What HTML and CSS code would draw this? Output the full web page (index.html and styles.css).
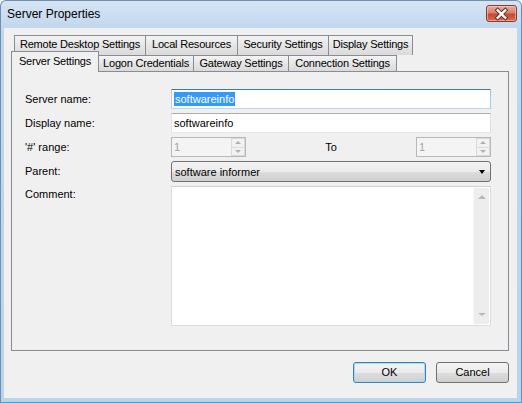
FILE: index.html
```html
<!DOCTYPE html>
<html lang="en">

<head>
    <meta charset="UTF-8">
    <title>Server Properties</title>
    <link rel="stylesheet" href="styles.css">
</head>

<body>
    <div class="window">

        <div class="titlebar">
            <span class="title">Server Properties</span>
            <div class="close_btn">
                <svg width="30" height="16" viewBox="0 0 30 16">
                    <path d="M11 4 L19 12 M19 4 L11 12" stroke="#5e2118" stroke-width="4.2" stroke-linecap="square" fill="none" />
                    <path d="M11 4 L19 12 M19 4 L11 12" stroke="#fff" stroke-width="2.4" stroke-linecap="square" fill="none" />
                </svg>
            </div>
        </div>

        <div class="client">

            <!-- two rows of tabs, the front row sits on the panel -->
            <div class="tab_row back">
                <div class="tab" style="width:132px">Remote Desktop Settings</div>
                <div class="tab" style="width:93px">Local Resources</div>
                <div class="tab" style="width:92px">Security Settings</div>
                <div class="tab" style="width:85px">Display Settings</div>
            </div>
            <div class="tab_row front">
                <div class="tab active" style="width:88px">Server Settings</div>
                <div class="tab" style="width:96px">Logon Credentials</div>
                <div class="tab" style="width:96px">Gateway Settings</div>
                <div class="tab" style="width:109px">Connection Settings</div>
            </div>

            <div class="panel">
                <div class="form">
                    <span class="label">Server name:</span>
                    <div class="textbox focused"><span class="selected">softwareinfo</span></div>

                    <span class="label">Display name:</span>
                    <div class="textbox">softwareinfo</div>

                    <span class="label">'#' range:</span>
                    <div class="range">
                        <div class="spin">
                            <span class="spin_value">1</span>
                            <div class="spin_btns">
                                <div class="spin_btn"><i class="arrow_up"></i></div>
                                <div class="spin_btn"><i class="arrow_down"></i></div>
                            </div>
                        </div>
                        <span class="to">To</span>
                        <div class="spin">
                            <span class="spin_value">1</span>
                            <div class="spin_btns">
                                <div class="spin_btn"><i class="arrow_up"></i></div>
                                <div class="spin_btn"><i class="arrow_down"></i></div>
                            </div>
                        </div>
                    </div>

                    <span class="label">Parent:</span>
                    <div class="combo">
                        <span>software informer</span>
                        <i class="combo_arrow"></i>
                    </div>

                    <span class="label comment_label">Comment:</span>
                    <div class="memo">
                        <div class="memo_text"></div>
                        <div class="scrollbar">
                            <i class="arrow_up light"></i>
                            <i class="arrow_down light"></i>
                        </div>
                    </div>
                </div>
            </div>

            <div class="buttons">
                <div class="btn default">OK</div>
                <div class="btn">Cancel</div>
            </div>
        </div>
    </div>
</body>

</html>
```

FILE: styles.css
```css
* {
    box-sizing: border-box;
}

body {
    margin: 0;
    font-family: "Liberation Sans", Arial, sans-serif;
    font-size: 11px;
    color: #000;
    background: #fff;
}

/* ==== window frame ==== */

.window {
    width: 522px;
    height: 403px;
    display: flex;
    flex-direction: column;
    padding: 0 4px 4px 3px;
    border: 1px solid;
    border-color: #6f8fb0 #3aa0d8 #3aa0d8 #6f8fb0;
    border-radius: 6px 6px 0 0;
    background: linear-gradient(#d6e4f4, #c1d6ec 28px, #bcd3ea);
}

.titlebar {
    height: 27px;
    display: flex;
    justify-content: space-between;
    align-items: flex-start;
    padding-left: 3px;
}

.title {
    font-size: 12px;
    line-height: 27px;
}

.close_btn {
    width: 31px;
    height: 17px;
    margin-top: 4px;
    border: 1px solid #8a3a2e;
    border-radius: 3px;
    background: linear-gradient(#e9ab9d, #d8806f 45%, #c54a37 55%, #d86a52);
    box-shadow: inset 0 0 0 1px rgba(255, 220, 210, 0.5);
    display: flex;
    align-items: center;
    justify-content: center;
}

.close_btn svg {
    display: block;
}

.client {
    flex: 1;
    background: #f0f0f0;
    padding: 7px 8px 0 7px;
    display: flex;
    flex-direction: column;
}

/* ==== tabs ==== */

.tab_row {
    display: flex;
}

.tab_row.back {
    height: 20px;
    margin-left: 3px;
}

.tab_row.front {
    height: 20px;
    margin-top: -4px;
    align-items: flex-end;
    position: relative;
    z-index: 1;
}

.tab {
    border: 1px solid #898c95;
    border-bottom: none;
    margin-left: -1px;
    text-align: center;
    white-space: nowrap;
    letter-spacing: -0.2px;
    background: linear-gradient(#f4f4f4, #e6e6e6 50%, #dadada);
}

.tab:first-child {
    margin-left: 0;
}

.back .tab {
    height: 20px;
    line-height: 17px;
}

.front .tab {
    height: 16px;
    line-height: 15px;
}

.front .tab.active {
    height: 21px;
    margin-bottom: -1px;
    padding-top: 1px;
    line-height: 17px;
    background: #f0f0f0;
    position: relative;
    z-index: 2;
}

.panel {
    height: 280px;
    border: 1px solid #898c95;
    background: #f0f0f0;
    padding: 17px 0 0 13px;
}

/* ==== form ==== */

.form {
    display: grid;
    grid-template-columns: 146px 320px;
    grid-template-rows: 20px 20px 20px 21px 140px;
    row-gap: 4px;
}

.label {
    line-height: 20px;
}

.comment_label {
    line-height: 16px;
}

.textbox {
    height: 20px;
    border: 1px solid;
    border-color: #abadb3 #dbdfe6 #e3e9ef #e2e3ea;
    background: #fff;
    padding-left: 2px;
    line-height: 18px;
}

.textbox.focused {
    border-color: #3d7bad #a4c9e3 #b7d9ed #b5cfe7;
}

.selected {
    background: #3399ff;
    color: #fff;
    padding: 1px 1px;
}

.range {
    display: flex;
    justify-content: space-between;
    align-items: center;
}

.spin {
    width: 75px;
    height: 20px;
    display: flex;
    border: 1px solid #b7b7b7;
    background: #f4f4f4;
}

.spin_value {
    flex: 1;
    color: #a3a3a3;
    padding-left: 2px;
    line-height: 18px;
}

.spin_btns {
    width: 14px;
    display: flex;
    flex-direction: column;
}

.spin_btn {
    flex: 1;
    border: 1px solid #dadada;
    background: #f2f2f2;
    display: flex;
    align-items: center;
    justify-content: center;
}

.spin_btn + .spin_btn {
    border-top: none;
}

.arrow_up,
.arrow_down {
    width: 0;
    height: 0;
    border-left: 3px solid transparent;
    border-right: 3px solid transparent;
}

.arrow_up {
    border-bottom: 3px solid #b0b0b0;
}

.arrow_down {
    border-top: 3px solid #b0b0b0;
}

.combo {
    height: 21px;
    border: 1px solid #707070;
    border-radius: 3px;
    background: linear-gradient(#f3f3f3, #ebebeb 50%, #dddddd 51%, #cfcfcf);
    display: flex;
    align-items: center;
    justify-content: space-between;
    padding: 0 5px 0 3px;
}

.combo_arrow {
    width: 0;
    height: 0;
    border-left: 3.5px solid transparent;
    border-right: 3.5px solid transparent;
    border-top: 4px solid #000;
}

.memo {
    display: flex;
    border: 1px solid #dcdcdc;
    border-top-color: #cfcfcf;
    background: #fff;
}

.memo_text {
    flex: 1;
}

.scrollbar {
    width: 16px;
    margin: 1px 1px 1px 0;
    background: #ededed;
    border-left: 1px solid #f6f6f6;
    display: flex;
    flex-direction: column;
    justify-content: space-between;
    align-items: center;
    padding: 7px 0 8px;
}

.light.arrow_up {
    border-left-width: 4px;
    border-right-width: 4px;
    border-bottom: 4px solid #b9b9b9;
}

.light.arrow_down {
    border-left-width: 4px;
    border-right-width: 4px;
    border-top: 3px solid #b9b9b9;
}

/* ==== dialog buttons ==== */

.buttons {
    display: flex;
    justify-content: flex-end;
    gap: 10px;
    margin-top: 11px;
}

.btn {
    width: 73px;
    height: 21px;
    border: 1px solid #707070;
    border-radius: 3px;
    background: linear-gradient(#f3f3f3, #ebebeb 50%, #dddddd 51%, #cfcfcf);
    text-align: center;
    line-height: 19px;
}

.btn.default {
    border-color: #3c7fb1;
    box-shadow: inset 0 0 0 1px #a9dcf5;
}
```
